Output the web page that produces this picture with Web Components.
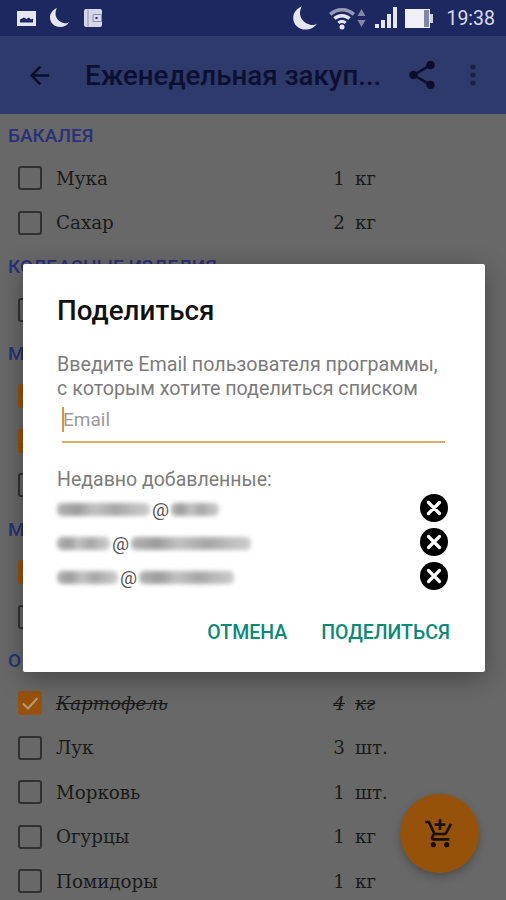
<!DOCTYPE html>
<html>
<head>
<meta charset="utf-8">
<style>
  html, body { margin: 0; height: 900px; overflow: hidden; background: #686868; }
  body { position: relative; font-family: Roboto, sans-serif; }
</style>
</head>
<body>
<status-bar></status-bar>
<app-toolbar title="Еженедельная закуп..."></app-toolbar>
<section-head>БАКАЛЕЯ</section-head>
<list-row name="Мука" qty="1" unit="кг"></list-row>
<list-row name="Сахар" qty="2" unit="кг"></list-row>
<section-head>КОЛБАСНЫЕ ИЗДЕЛИЯ</section-head>
<list-row></list-row>
<section-head>М</section-head>
<list-row checked></list-row>
<list-row checked></list-row>
<list-row></list-row>
<section-head>М</section-head>
<list-row checked></list-row>
<list-row></list-row>
<section-head>О</section-head>
<list-row name="Картофель" qty="4" unit="кг" checked done></list-row>
<list-row name="Лук" qty="3" unit="шт."></list-row>
<list-row name="Морковь" qty="1" unit="шт."></list-row>
<list-row name="Огурцы" qty="1" unit="кг"></list-row>
<list-row name="Помидоры" qty="1" unit="кг"></list-row>
<cart-fab></cart-fab>
<share-dialog>
  <recent-email a="93" b="48"></recent-email>
  <recent-email a="53" b="120"></recent-email>
  <recent-email a="61" b="95"></recent-email>
</share-dialog>

<script>
class StatusBar extends HTMLElement {
  constructor() {
    super();
    this.shadow = this.attachShadow({ mode: "open" });
    this.shadow.innerHTML = `
      <style>
        :host { display: flex; align-items: center; height: 36px; background: #1e2860; padding: 0 11px 0 16px; box-sizing: border-box; color: #e4e6f0; }
        .left { display: flex; align-items: center; gap: 12px; flex: 1; }
        .right { display: flex; align-items: center; }
        svg { display: block; fill: currentColor; }
        .time { font: 400 19.5px Roboto, sans-serif; margin-left: 12px; color: #d8dbe8; }
      </style>
      <div class="left">
        <svg width="21" height="17" viewBox="0 0 21 17"><path fill-rule="evenodd" d="M1 1h19v15H1z M4 12.500h13V8.500l-2 1-2-2-2.500 1.500L8 7.500l-4 2z"/></svg>
        <svg width="22" height="22" viewBox="0 0 22 22"><path d="M8 1C3.500 3 1 6.500 1 10.500 1 16 5.500 20 11 20c4 0 7.500-2 9.500-5-1.500 1-3.500 1.400-5 1.200C10.500 15.700 6.500 11 6.500 7c0-2.200.5-4.300 1.500-6z"/></svg>
        <svg width="20" height="20" viewBox="0 0 20 20"><path fill="#d5d8e6" d="M1 3q0-2 2-2h14q2 0 2 2v14q0 2-2 2H3q-2 0-2-2z"/><path fill="none" stroke="#8b90b0" stroke-width="1" d="M5 1.500V18.500M10 6.500h8.500v7H10z"/><path fill="#1e2860" d="M12.500 9h2v2h-2z"/></svg>
      </div>
      <div class="right">
        <svg width="27" height="27" viewBox="0 0 22 22" style="margin-right:9px"><path d="M8 1C3.500 3 1 6.500 1 10.500 1 16 5.500 20 11 20c4 0 7.500-2 9.500-5-1.500 1-3.500 1.400-5 1.200C10.500 15.700 6.500 11 6.500 7c0-2.200.5-4.300 1.500-6z"/></svg>
        <svg width="28" height="24" viewBox="0 0 28 24"><path d="M14 2C8.500 2 4.500 4 1 7l2.400 2.700C6.500 7 10 5.500 14 5.500S21.500 7 24.600 9.700L27 7C23.500 4 19.500 2 14 2z" opacity=".6"/><path d="M14 8c-3.600 0-6.500 1.300-8.700 3.300l2.300 2.500C9.300 12.300 11.500 11.400 14 11.400s4.700.9 6.400 2.400l2.300-2.500C20.500 9.300 17.600 8 14 8z"/><path d="M14 14c-1.900 0-3.500.7-4.600 1.700l2 2.200c.7-.6 1.600-1 2.600-1s1.900.4 2.600 1l2-2.200C17.500 14.700 15.900 14 14 14z"/><circle cx="14" cy="21" r="2.500"/></svg>
        <svg width="9" height="20" viewBox="0 0 9 20" style="margin-left:1px;opacity:.5"><path d="M4.500 1 8.500 8h-8zM.5 12h8l-4 7z"/></svg>
        <svg width="25" height="24" viewBox="0 0 25 24" style="margin-left:8px"><rect x="1" y="18" width="4" height="4"/><rect x="7" y="14" width="4" height="8"/><rect x="13" y="8" width="4" height="14"/><rect x="19" y="1" width="4" height="21"/></svg>
        <svg width="30" height="21" viewBox="0 0 30 21" style="margin-left:5px"><path d="M1 1h25v19H1z" fill="#eef0f6"/><path d="M20 2h5v17h-5z" fill="#7f86a8"/><path d="M26 6h3v9h-3z" fill="#cfd2e2"/></svg>
        <span class="time">19:38</span>
      </div>
    `;
  }
}
customElements.define("status-bar", StatusBar);

class AppToolbar extends HTMLElement {
  constructor() {
    super();
    this.shadow = this.attachShadow({ mode: "open" });
    this.shadow.innerHTML = `
      <style>
        :host { display: flex; align-items: center; height: 78px; background: #2e396c; color: #0a0e2a; box-sizing: border-box; padding: 0 30px 0 25px; }
        svg { display: block; fill: currentColor; flex: none; }
        .title { flex: 1; font: 500 27.700px Roboto, sans-serif; margin-left: 31px; white-space: nowrap; color: #0c1030; }
        .dots { color: #182048; margin-left: 31px; }
      </style>
      <svg width="29" height="29" viewBox="0 0 24 24"><path d="M20 11H7.830l5.590-5.590L12 4l-8 8 8 8 1.410-1.410L7.830 13H20v-2z"/></svg>
      <div class="title"></div>
      <svg width="34" height="34" viewBox="0 0 24 24"><path d="M18 16.080c-.76 0-1.440.3-1.960.77L8.910 12.700c.05-.23.09-.46.09-.7s-.04-.47-.09-.7l7.050-4.110c.54.5 1.250.81 2.040.81 1.660 0 3-1.340 3-3s-1.340-3-3-3-3 1.340-3 3c0 .24.04.47.09.7L8.040 9.810C7.500 9.310 6.790 9 6 9c-1.660 0-3 1.340-3 3s1.340 3 3 3c.79 0 1.500-.31 2.040-.81l7.120 4.160c-.05.21-.08.43-.08.65 0 1.610 1.310 2.920 2.920 2.920s2.920-1.310 2.920-2.920-1.310-2.920-2.920-2.920z"/></svg>
      <svg class="dots" width="6" height="24" viewBox="0 0 6 24"><circle cx="3" cy="4" r="2.600"/><circle cx="3" cy="12" r="2.600"/><circle cx="3" cy="20" r="2.600"/></svg>
    `;
    this.shadow.querySelector(".title").textContent = this.getAttribute("title");
    this.removeAttribute("title");
  }
}
customElements.define("app-toolbar", AppToolbar);

class SectionHead extends HTMLElement {
  constructor() {
    super();
    this.shadow = this.attachShadow({ mode: "open" });
    this.shadow.innerHTML = `
      <style>
        :host { display: flex; align-items: center; height: 42.200px; box-sizing: border-box; padding: 1px 0 0 8px; font: 500 19px Roboto, sans-serif; color: #28307a; white-space: nowrap; }
      </style>
      <slot></slot>
    `;
  }
}
customElements.define("section-head", SectionHead);

class ListRow extends HTMLElement {
  constructor() {
    super();
    this.shadow = this.attachShadow({ mode: "open" });
    const checked = this.hasAttribute("checked");
    const done = this.hasAttribute("done");
    this.shadow.innerHTML = `
      <style>
        :host { display: flex; align-items: center; height: 44.500px; padding-left: 18px; box-sizing: border-box; font: 400 18.300px "DejaVu Serif", serif; color: #1a1a1a; }
        .box { width: 24px; height: 24px; box-sizing: border-box; border: 2px solid #303030; border-radius: 3px; flex: none; }
        .box.on { background: #97520a; border: 0; display: flex; align-items: center; justify-content: center; }
        .name { margin-left: 14px; width: 265px; white-space: nowrap; }
        .qty { width: 24px; text-align: right; }
        .unit { margin-left: 10px; }
        .done { font-style: italic; text-decoration: line-through; }
      </style>
      <div class="box ${checked ? "on" : ""}">${checked ? '<svg width="20" height="20" viewBox="0 0 20 20"><path d="M3 10.500 8 15.500 17.500 5" fill="none" stroke="#b89878" stroke-width="2"/></svg>' : ""}</div>
      <span class="name ${done ? "done" : ""}"></span>
      <span class="qty ${done ? "done" : ""}"></span>
      <span class="unit ${done ? "done" : ""}"></span>
    `;
    this.shadow.querySelector(".name").textContent = this.getAttribute("name") || "";
    this.shadow.querySelector(".qty").textContent = this.getAttribute("qty") || "";
    this.shadow.querySelector(".unit").textContent = this.getAttribute("unit") || "";
  }
}
customElements.define("list-row", ListRow);

class CartFab extends HTMLElement {
  constructor() {
    super();
    this.shadow = this.attachShadow({ mode: "open" });
    this.shadow.innerHTML = `
      <style>
        :host { position: absolute; left: 400px; top: 794px; width: 79px; height: 79px; border-radius: 50%; background: #97520a; box-shadow: 0 4px 8px rgba(0,0,0,.25); display: flex; align-items: center; justify-content: center; color: #171008; }
        svg { fill: currentColor; display: block; }
      </style>
      <svg width="32" height="32" viewBox="0 0 24 24"><path d="M11 9h2V6h3V4h-3V1h-2v3H8v2h3v3zm-4 9c-1.100 0-1.990.9-1.990 2S5.900 22 7 22s2-.9 2-2-.9-2-2-2zm10 0c-1.100 0-1.990.9-1.990 2s.89 2 1.990 2 2-.9 2-2-.9-2-2-2zm-9.830-3.250l.03-.12.9-1.630h7.450c.75 0 1.410-.41 1.750-1.030l3.860-7.010L19.420 4h-.01l-1.100 2-2.760 5H8.530l-.13-.27L6.160 6l-.95-2-.94-2H1v2h2l3.600 7.590-1.350 2.450c-.16.28-.25.61-.25.96 0 1.100.9 2 2 2h12v-2H7.420c-.13 0-.25-.11-.25-.25z"/></svg>
    `;
  }
}
customElements.define("cart-fab", CartFab);

class RecentEmail extends HTMLElement {
  constructor() {
    super();
    this.shadow = this.attachShadow({ mode: "open" });
    const a = this.getAttribute("a");
    const b = this.getAttribute("b");
    const smear = "background: linear-gradient(90deg, #b4b4b4, #9c9c9c 22%, #c2c2c2 40%, #a6a6a6 63%, #bcbcbc 82%, #cdcdcd);";
    this.shadow.innerHTML = `
      <style>
        :host { display: flex; align-items: center; height: 34px; padding-right: 37px; }
        .mail { flex: 1; display: flex; align-items: center; gap: 2px; padding-top: 4px; }
        .smear { height: 13px; filter: blur(2px); border-radius: 5px; ${smear} }
        .at { font: 400 19px Roboto, sans-serif; color: #555; }
        .x { display: block; }
      </style>
      <div class="mail">
        <div class="smear" style="width:${a}px"></div>
        <span class="at">@</span>
        <div class="smear" style="width:${b}px"></div>
      </div>
      <svg class="x" width="28" height="28" viewBox="0 0 28 28"><circle cx="14" cy="14" r="14" fill="#000"/><path d="M8.500 8.500l11 11M19.500 8.500l-11 11" stroke="#fff" stroke-width="3.200" stroke-linecap="round"/></svg>
    `;
  }
}
customElements.define("recent-email", RecentEmail);

class ShareDialog extends HTMLElement {
  constructor() {
    super();
    this.shadow = this.attachShadow({ mode: "open" });
    this.shadow.innerHTML = `
      <style>
        :host { position: absolute; left: 23px; top: 264px; width: 462px; height: 408px; background: #fff; border-radius: 2px; box-shadow: 0 6px 24px rgba(0,0,0,.35); box-sizing: border-box; padding: 29px 0 0 34px; display: flex; flex-direction: column; font-family: Roboto, sans-serif; }
        h2 { margin: 0; font: 500 27.800px/36px Roboto, sans-serif; color: #111; }
        p { margin: 24px 0 0; font: 400 19.700px/23.500px Roboto, sans-serif; color: #7c7c7c; white-space: nowrap; }
        .field { margin: 0 40px 0 5px; height: 38px; padding-bottom: 3px; border-bottom: 2px solid #dcae6a; display: flex; align-items: center; font: 400 19px Roboto, sans-serif; color: #9a9a9a; }
        .caret { width: 2px; height: 25px; background: #d8953c; margin-right: -1px; }
        .recent { margin-top: 23.500px; font: 400 19.500px/25px Roboto, sans-serif; color: #7c7c7c; }
        .list { margin-top: -1px; }
        .actions { display: flex; justify-content: flex-end; gap: 34px; padding-right: 35px; margin-top: 28px; font: 500 19.500px Roboto, sans-serif; color: #0a8a78; }
      </style>
      <h2>Поделиться</h2>
      <p>Введите Email пользователя программы,<br>с которым хотите поделиться списком</p>
      <div class="field"><span class="caret"></span><span>Email</span></div>
      <div class="recent">Недавно добавленные:</div>
      <div class="list"><slot></slot></div>
      <div class="actions"><span>ОТМЕНА</span><span>ПОДЕЛИТЬСЯ</span></div>
    `;
  }
}
customElements.define("share-dialog", ShareDialog);
</script>
</body>
</html>
